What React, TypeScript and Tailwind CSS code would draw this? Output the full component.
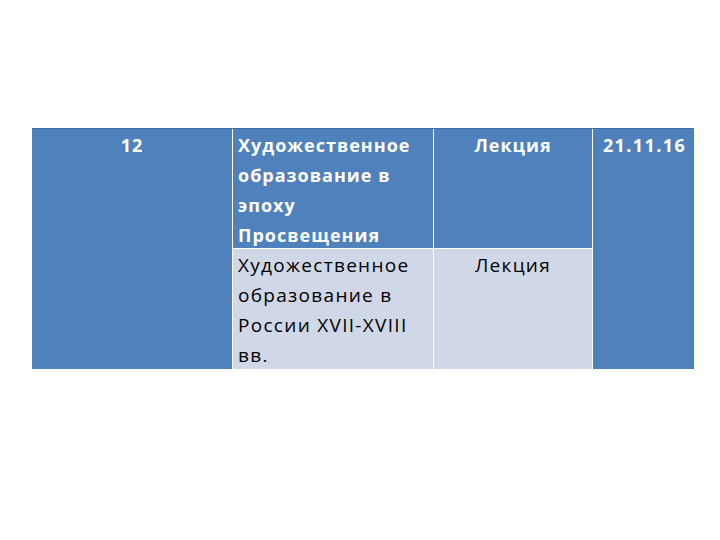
const font = { fontFamily: '"Open Sans", "Noto Sans", sans-serif' };

export default function App() {
  return (
    <div className="h-[540px] w-[720px] bg-white pt-[128px] pl-[32px]" style={font}>
      <div className="grid w-[662px] grid-cols-[200px_200px_158px_101px] grid-rows-[119px_120px] gap-px border-t border-[#3f6fa8] bg-white text-[18px] leading-[30px] tracking-[1px]">
        <div className="row-span-2 bg-[#4f81bd] pt-px text-center font-bold text-white">
          12
        </div>
        <div className="bg-[#4f81bd] pl-[5px] pr-[4px] pt-px font-bold text-white">
          Художественное образование в эпоху Просвещения
        </div>
        <div className="bg-[#4f81bd] pt-px text-center font-bold text-white">
          Лекция
        </div>
        <div className="row-span-2 bg-[#4f81bd] pt-px pl-[2px] text-center font-bold tracking-[1.4px] text-white">
          21.11.16
        </div>
        <div className="bg-[#d0d8e8] pl-[5px] pr-[4px] pt-px text-[19px] tracking-[1.3px] text-black">
          Художественное образование в России XVII-XVIII вв.
        </div>
        <div className="bg-[#d0d8e8] pt-px text-center text-[19px] tracking-[1.3px] text-black">
          Лекция
        </div>
      </div>
    </div>
  );
}
